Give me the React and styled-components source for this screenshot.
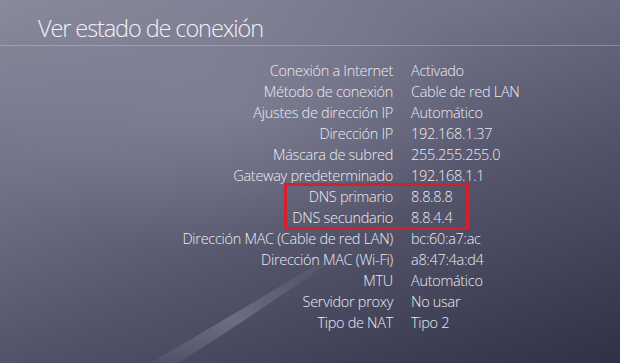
import styled, { createGlobalStyle } from 'styled-components';

const GlobalStyle = createGlobalStyle`
  html, body {
    margin: 0;
    padding: 0;
    background: #3a3a4e;
  }
`;

const Screen = styled.div`
  position: relative;
  width: 620px;
  height: 363px;
  overflow: hidden;
  font-family: 'Open Sans', 'Liberation Sans', sans-serif;
  font-weight: 300;
  color: #ececf2;
  background:
    radial-gradient(ellipse 360px 200px at 230px 110px, rgba(160, 160, 178, 0.3), rgba(160, 160, 178, 0) 70%),
    linear-gradient(160deg, #8a8a9c 0%, #727288 30%, #525269 62%, #313145 100%);
`;

const Streak = styled.svg`
  position: absolute;
  left: 0;
  top: 0;
  pointer-events: none;
`;

const Header = styled.header`
  height: 46px;
  border-bottom: 1px solid rgba(190, 190, 205, 0.45);
  box-sizing: border-box;
  padding: 13px 0 0 38px;
`;

const Title = styled.h1`
  margin: 0;
  font-size: 23.5px;
  font-weight: 300;
  letter-spacing: -1.1px;
  line-height: 30px;
  color: #f2f2f6;
`;

const List = styled.div`
  position: relative;
  display: grid;
  grid-template-columns: 393px auto;
  column-gap: 18px;
  grid-auto-rows: 21px;
  padding-top: 14px;
`;

const Label = styled.div`
  text-align: right;
  font-size: 14.5px;
  line-height: 21px;
  letter-spacing: -0.3px;
  white-space: nowrap;
`;

const Value = styled(Label)`
  text-align: left;
`;

const Highlight = styled.div`
  position: absolute;
  left: 284px;
  width: 185px;
  height: 47px;
  border: 3px solid #d61f2b;
  box-sizing: border-box;
  pointer-events: none;
`;

const rows = [
  ['Conexión a Internet', 'Activado'],
  ['Método de conexión', 'Cable de red LAN'],
  ['Ajustes de dirección IP', 'Automático'],
  ['Dirección IP', '192.168.1.37'],
  ['Máscara de subred', '255.255.255.0'],
  ['Gateway predeterminado', '192.168.1.1'],
  ['DNS primario', '8.8.8.8'],
  ['DNS secundario', '8.8.4.4'],
  ['Dirección MAC (Cable de red LAN)', 'bc:60:a7:ac'],
  ['Dirección MAC (Wi-Fi)', 'a8:47:4a:d4'],
  ['MTU', 'Automático'],
  ['Servidor proxy', 'No usar'],
  ['Tipo de NAT', 'Tipo 2'],
];

export default function App() {
  return (
    <>
      <GlobalStyle />
      <Screen>
        <Streak width="620" height="363" viewBox="0 0 620 363">
          <defs>
            <linearGradient id="streak" x1="0" y1="1" x2="1" y2="0">
              <stop offset="0" stopColor="#b8b8c8" stopOpacity="0.05" />
              <stop offset="0.4" stopColor="#b8b8c8" stopOpacity="0.3" />
              <stop offset="0.75" stopColor="#b8b8c8" stopOpacity="0.1" />
              <stop offset="1" stopColor="#b8b8c8" stopOpacity="0" />
            </linearGradient>
          </defs>
          <path d="M150 363 Q250 305 340 250 L343 253 Q262 310 178 363 Z" fill="url(#streak)" />
        </Streak>
        <Header>
          <Title>Ver estado de conexión</Title>
        </Header>
        <List>
          {rows.map(([k, v]) => (
            <>
              <Label key={k}>{k}</Label>
              <Value key={k + 'v'}>{v}</Value>
            </>
          ))}
          <Highlight style={{ top: 14 + 21 * 6 - 3 }} />
        </List>
      </Screen>
    </>
  );
}
